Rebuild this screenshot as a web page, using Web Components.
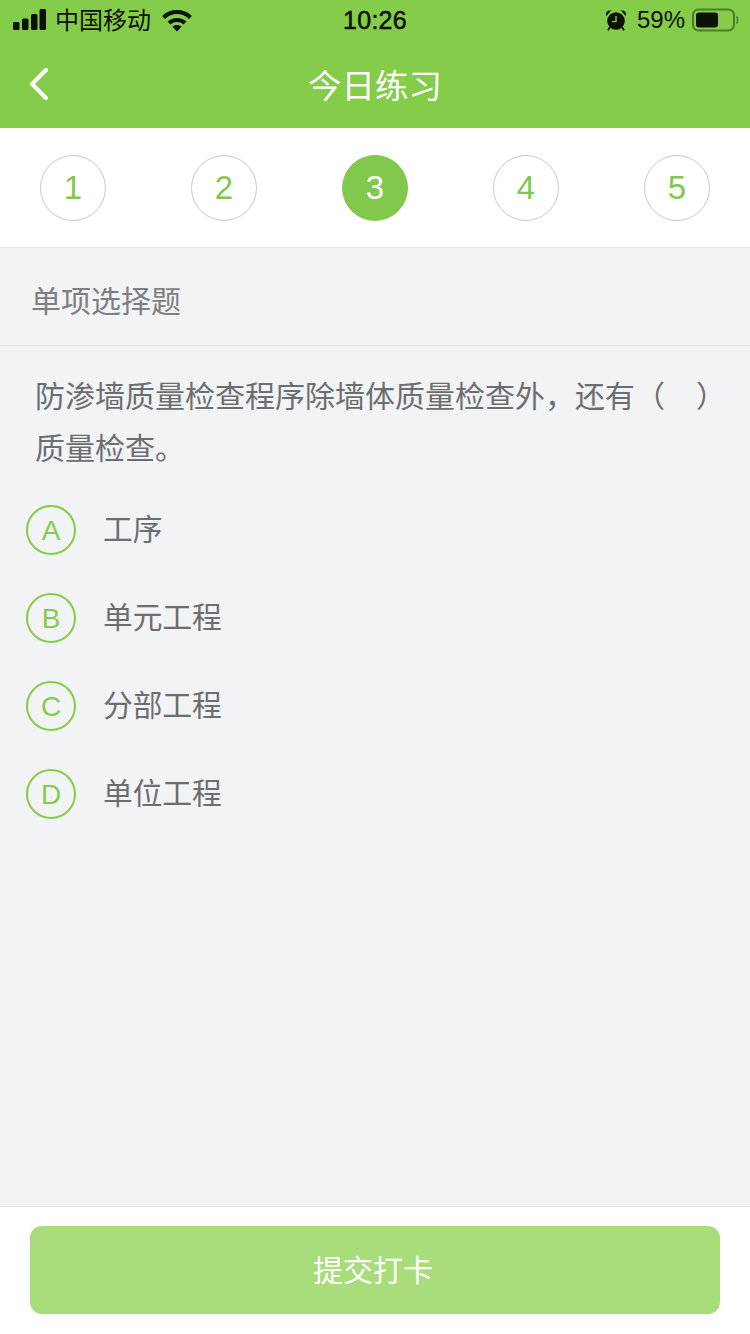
<!DOCTYPE html>
<html lang="zh">
<head>
<meta charset="utf-8">
<title>今日练习</title>
<style>
  html, body { margin: 0; padding: 0; }
  body {
    width: 750px;
    height: 1334px;
    overflow: hidden;
    display: flex;
    flex-direction: column;
    background: #f1f3f5;
    font-family: "Liberation Sans", "Noto Sans CJK SC", sans-serif;
  }
</style>
</head>
<body>
  <app-header title="今日练习"></app-header>
  <step-row current="3" count="5"></step-row>
  <section-label>单项选择题</section-label>
  <question-text>防渗墙质量检查程序除墙体质量检查外，还有（&nbsp;&nbsp;&nbsp;&#8201;）质量检查。</question-text>
  <option-list>
    <answer-option letter="A">工序</answer-option>
    <answer-option letter="B">单元工程</answer-option>
    <answer-option letter="C">分部工程</answer-option>
    <answer-option letter="D">单位工程</answer-option>
  </option-list>
  <submit-bar>提交打卡</submit-bar>

<script>
class AppHeader extends HTMLElement {
  constructor() {
    super();
    this.attachShadow({ mode: "open" });
    this.shadowRoot.innerHTML = `
      <style>
        :host { display: block; height: 128px; background: #86cc4b; flex: none; }
        .status {
          height: 40px;
          display: grid;
          grid-template-columns: 1fr auto 1fr;
          align-items: center;
          color: #0b1203;
          font-size: 24px;
        }
        .left, .right { display: flex; align-items: center; }
        .left { padding-left: 13px; }
        .right { justify-content: flex-end; padding-right: 11px; }
        .carrier { margin-left: 9px; margin-bottom: 4px; font-size: 24px; }
        .wifi { margin-left: 11px; }
        .time { font-size: 25px; -webkit-text-stroke: .5px #0b1203; letter-spacing: .3px; }
        .pct { margin-left: 10px; margin-right: 7px; }
        .nav {
          height: 88px;
          box-sizing: border-box;
          padding-bottom: 2px;
          display: flex;
          align-items: center;
          justify-content: center;
          position: relative;
          color: #fff;
          font-size: 33.5px;
        }
        .back { position: absolute; left: 29px; top: 28px; }
      </style>
      <div class="status">
        <div class="left">
          <svg width="33" height="22" viewBox="0 0 33 22" fill="#0b1203">
            <rect x="0" y="13" width="6.5" height="8" rx="1.5"/>
            <rect x="9" y="9.5" width="6.5" height="11.5" rx="1.5"/>
            <rect x="18" y="5" width="6.5" height="16" rx="1.5"/>
            <rect x="26.5" y="0" width="6.5" height="21" rx="1.5"/>
          </svg>
          <span class="carrier">中国移动</span>
          <svg class="wifi" width="30" height="23" viewBox="0 0 30 23" fill="none" stroke="#0b1203" stroke-width="4.2">
            <path d="M1.6 8.4 C9 1.2 21 1.2 28.4 8.4"/>
            <path d="M7 14 C11.4 10 18.6 10 23 14"/>
            <path d="M10.4 17.6 L15 22.6 L19.6 17.6 C17 15.4 13 15.4 10.4 17.6 Z" fill="#0b1203" stroke="none"/>
          </svg>
        </div>
        <div class="time">10:26</div>
        <div class="right">
          <svg width="22" height="22" viewBox="0 0 22 22" fill="#0b1203">
            <circle cx="11" cy="12" r="8.8"/>
            <path d="M1.4 7 C0 3.6 2.6 .6 6.2 1.6 Z M20.6 7 C22 3.6 19.4 .6 15.8 1.6 Z"/>
            <path d="M5 18 L3 21.4 M17 18 L19 21.4" stroke="#0b1203" stroke-width="1.8"/>
            <path d="M11 7 V12.6 H7" fill="none" stroke="#86cc4b" stroke-width="1.4"/>
          </svg>
          <span class="pct">59%</span>
          <svg width="47" height="24" viewBox="0 0 47 24">
            <rect x="1" y="1.5" width="41" height="21" rx="5.5" fill="none" stroke="#4f7a28" stroke-width="2"/>
            <rect x="4" y="4.5" width="22" height="15" rx="3" fill="#0b1203"/>
            <path d="M44.5 8.5 C46 9.5 46 14.5 44.5 15.5" fill="none" stroke="#4f7a28" stroke-width="1.6"/>
          </svg>
        </div>
      </div>
      <div class="nav">
        <svg class="back" width="20" height="32" viewBox="0 0 20 32" fill="none" stroke="#fff" stroke-width="4" stroke-linecap="round" stroke-linejoin="round">
          <path d="M17 2 L3 16 L17 30"/>
        </svg>
        <span></span>
      </div>`;
  }
  connectedCallback() {
    this.shadowRoot.querySelector(".nav span").textContent = this.getAttribute("title") || "";
  }
}
customElements.define("app-header", AppHeader);

class StepRow extends HTMLElement {
  constructor() {
    super();
    this.attachShadow({ mode: "open" });
  }
  connectedCallback() {
    const current = Number(this.getAttribute("current"));
    const count = Number(this.getAttribute("count"));
    let items = "";
    for (let i = 1; i <= count; i++) {
      items += `<div class="step${i === current ? " on" : ""}">${i}</div>`;
    }
    this.shadowRoot.innerHTML = `
      <style>
        :host {
          display: flex;
          flex: none;
          height: 120px;
          box-sizing: border-box;
          padding: 27px 40px 0;
          justify-content: space-between;
          align-items: flex-start;
          background: #fff;
          border-bottom: 1px solid #e4e5e7;
        }
        .step {
          width: 66px;
          height: 66px;
          box-sizing: border-box;
          border: 1px solid #c9c9c9;
          border-radius: 50%;
          display: flex;
          align-items: center;
          justify-content: center;
          color: #82c84c;
          font-size: 33px;
        }
        .on { background: #82c84c; border-color: #82c84c; color: #fff; }
      </style>${items}`;
  }
}
customElements.define("step-row", StepRow);

class SectionLabel extends HTMLElement {
  constructor() {
    super();
    this.attachShadow({ mode: "open" });
    this.shadowRoot.innerHTML = `
      <style>
        :host {
          display: flex;
          flex: none;
          align-items: center;
          height: 98px;
          box-sizing: border-box;
          padding: 4px 0 0 31px;
          border-bottom: 1px solid #e4e5e7;
          color: #7d7e80;
          font-size: 30px;
        }
      </style><slot></slot>`;
  }
}
customElements.define("section-label", SectionLabel);

class QuestionText extends HTMLElement {
  constructor() {
    super();
    this.attachShadow({ mode: "open" });
    this.shadowRoot.innerHTML = `
      <style>
        :host {
          display: block;
          flex: none;
          padding: 25px 30px 0 35px;
          color: #6c6d6f;
          font-size: 30px;
          line-height: 52px;
        }
      </style><slot></slot>`;
  }
}
customElements.define("question-text", QuestionText);

class OptionList extends HTMLElement {
  constructor() {
    super();
    this.attachShadow({ mode: "open" });
    this.shadowRoot.innerHTML = `
      <style>
        :host {
          display: flex;
          flex: 1;
          flex-direction: column;
          gap: 38px;
          padding: 30px 0 0 26px;
        }
      </style><slot></slot>`;
  }
}
customElements.define("option-list", OptionList);

class AnswerOption extends HTMLElement {
  constructor() {
    super();
    this.attachShadow({ mode: "open" });
    this.shadowRoot.innerHTML = `
      <style>
        :host {
          display: flex;
          align-items: center;
          gap: 27px;
          height: 50px;
          color: #6c6d6f;
          font-size: 29.7px;
        }
        .mark {
          width: 50px;
          height: 50px;
          box-sizing: border-box;
          border: 2px solid #86cc4b;
          border-radius: 50%;
          padding-top: 2px;
          display: flex;
          align-items: center;
          justify-content: center;
          color: #86cc4b;
          font-size: 28px;
        }
        .text { padding-bottom: 6px; }
      </style>
      <div class="mark"></div><div class="text"><slot></slot></div>`;
  }
  connectedCallback() {
    this.shadowRoot.querySelector(".mark").textContent = this.getAttribute("letter") || "";
  }
}
customElements.define("answer-option", AnswerOption);

class SubmitBar extends HTMLElement {
  constructor() {
    super();
    this.attachShadow({ mode: "open" });
    this.shadowRoot.innerHTML = `
      <style>
        :host {
          display: block;
          flex: none;
          height: 128px;
          box-sizing: border-box;
          padding: 19px 30px 0;
          background: #fff;
          border-top: 1px solid #e6e8ec;
        }
        button {
          display: block;
          width: 100%;
          height: 88px;
          border: 0;
          border-radius: 12px;
          background: #a9dc7a;
          color: #fff;
          font: inherit;
          font-size: 30px;
          padding: 0 4px 4px 0;
        }
      </style>
      <button><slot></slot></button>`;
  }
}
customElements.define("submit-bar", SubmitBar);
</script>
</body>
</html>
